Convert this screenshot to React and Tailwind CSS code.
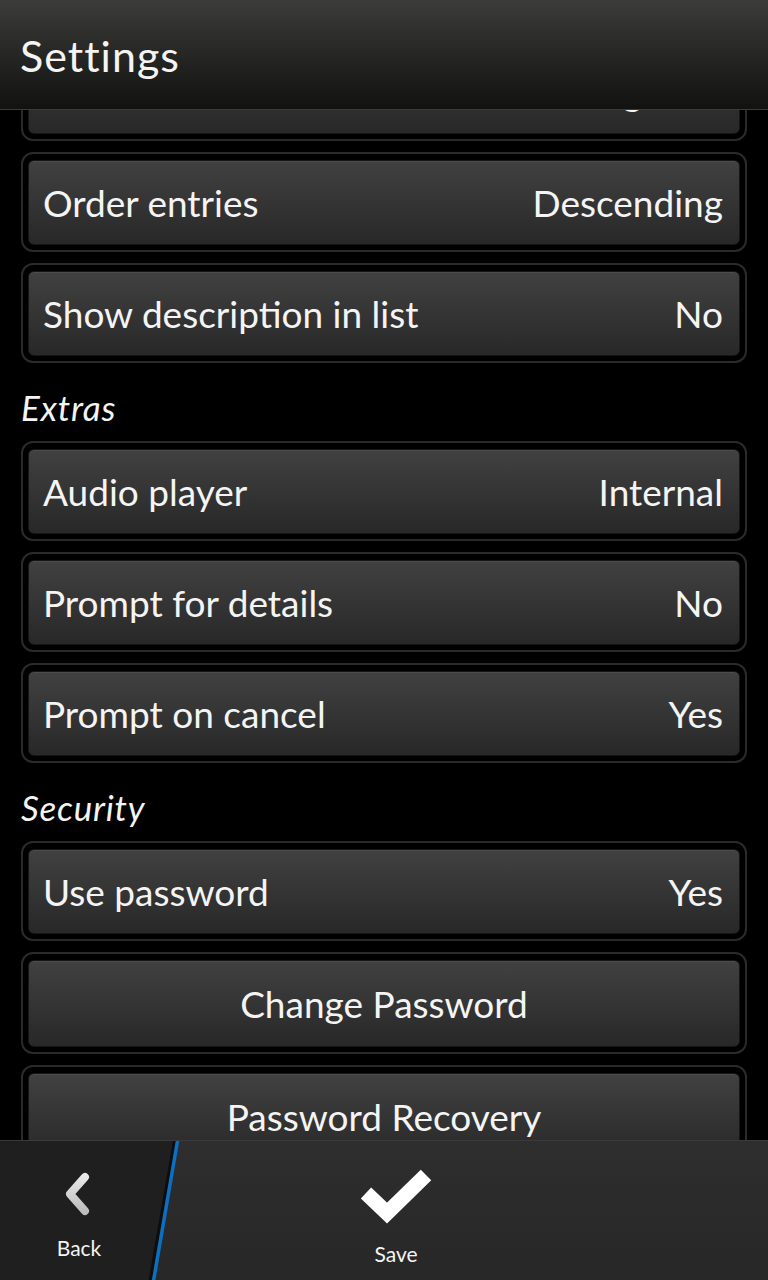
import React from "react";

function Row({ label, value }) {
  return (
    <div className="rounded-[12px] border-2 border-[#2a2a2a] px-[5px] pt-[6px] pb-[5px]">
      <div className="flex h-[85px] items-center justify-between rounded-[6px] border border-[#161616] bg-gradient-to-b from-[#414141] to-[#282828] pl-[14px] pr-[16px] text-[37px] text-[#f4f4f4] shadow-[inset_0_1px_0_#4c4c4c]">
        <span>{label}</span>
        <span>{value}</span>
      </div>
    </div>
  );
}

function ButtonRow({ label }) {
  return (
    <div className="rounded-[12px] border-2 border-[#2a2a2a] px-[5px] pt-[6px] pb-[5px]">
      <div className="flex h-[87px] items-center justify-center rounded-[6px] border border-[#161616] bg-gradient-to-b from-[#414141] to-[#282828] text-[37px] text-[#f4f4f4] shadow-[inset_0_1px_0_#4c4c4c]">
        <span>{label}</span>
      </div>
    </div>
  );
}

function Heading({ children }) {
  return (
    <div className="h-[56px] pt-[16px] text-[35px] italic leading-none tracking-[0.8px] text-[#f4f4f4]">
      {children}
    </div>
  );
}

export default function App() {
  return (
    <div className="relative h-[1280px] w-[768px] overflow-hidden bg-black font-['Lato',sans-serif]">
      <div className="flex flex-col gap-[11px] px-[21px] pt-[41px]">
        <Row label="" value="Long date" />
        <Row label="Order entries" value="Descending" />
        <Row label="Show description in list" value="No" />
        <Heading>Extras</Heading>
        <Row label="Audio player" value="Internal" />
        <Row label="Prompt for details" value="No" />
        <Row label="Prompt on cancel" value="Yes" />
        <Heading>Security</Heading>
        <Row label="Use password" value="Yes" />
        <ButtonRow label="Change Password" />
        <ButtonRow label="Password Recovery" />
      </div>

      {/* Title bar */}
      <div className="absolute left-0 right-0 top-0 h-[110px] border-b border-[#3a3a3c] bg-gradient-to-b from-[#3c3d3b] to-[#121311] pl-[20px] pt-[34px]">
        <div className="text-[43px] leading-none tracking-[1px] text-[#f4f4f4]">Settings</div>
      </div>

      {/* Action bar */}
      <div className="absolute bottom-0 left-0 right-0 h-[140px] border-t border-[#3a3a3a] bg-gradient-to-b from-[#2e2e2e] to-[#272727]">
        <svg className="absolute inset-0" width="768" height="140" viewBox="0 0 768 140">
          <polygon points="0,0 177,0 152,140 0,140" fill="#1f1f1f" />
          <line x1="174.5" y1="0" x2="150" y2="140" stroke="#0d0d0d" strokeWidth="3" />
          <line x1="177.5" y1="0" x2="153.5" y2="140" stroke="#0a70c4" strokeWidth="3.5" />
        </svg>
        <div className="relative flex h-full">
          <div className="flex w-[158px] flex-col items-center">
            <svg className="mt-[31px]" width="30" height="46" viewBox="0 0 30 46">
              <defs>
                <linearGradient id="chev" x1="0" y1="0" x2="0" y2="1">
                  <stop offset="0" stopColor="#e8e8e8" />
                  <stop offset="1" stopColor="#bdbdbd" />
                </linearGradient>
              </defs>
              <polyline points="21,5 6,22 21,39" fill="none" stroke="url(#chev)" strokeWidth="8" strokeLinecap="round" strokeLinejoin="round" />
            </svg>
            <div className="mt-[19px] text-[21px] leading-none text-[#f4f4f4]">Back</div>
          </div>
          <div className="ml-[178px] flex w-[120px] flex-col items-center">
            <svg className="mt-[27px]" width="72" height="56" viewBox="0 0 72 56">
              <polyline points="6,25 27,45 66,7" fill="none" stroke="#ffffff" strokeWidth="15" strokeLinecap="butt" strokeLinejoin="miter" />
            </svg>
            <div className="mt-[19px] text-[21px] leading-none text-[#f4f4f4]">Save</div>
          </div>
        </div>
      </div>
    </div>
  );
}
